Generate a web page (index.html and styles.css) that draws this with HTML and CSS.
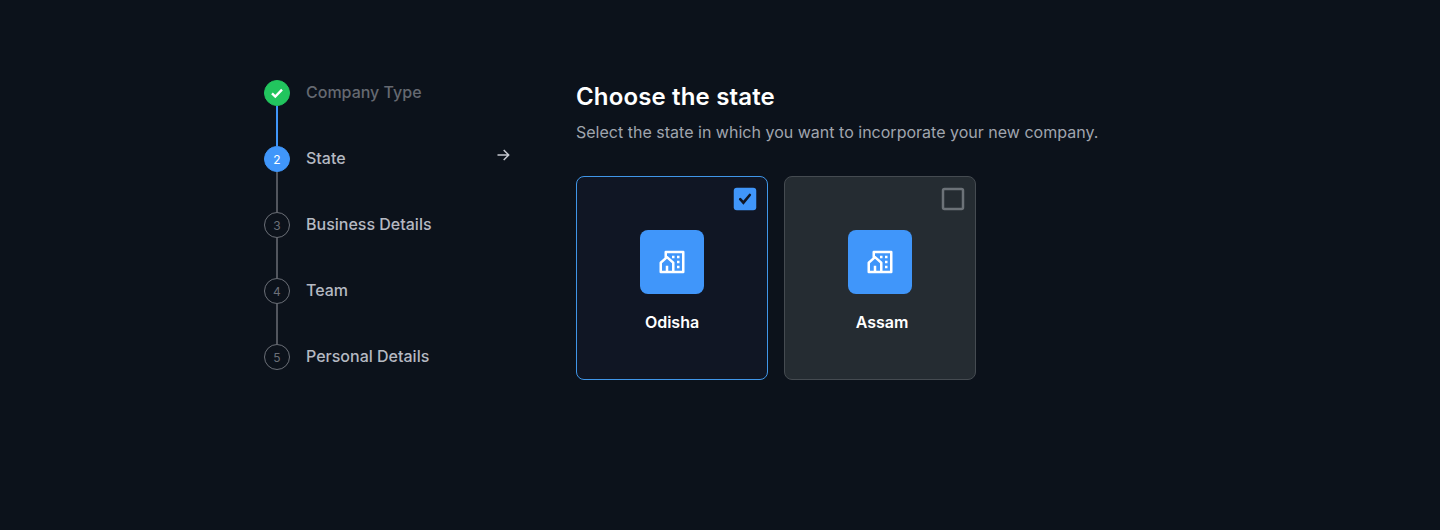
FILE: index.html
```html
<!DOCTYPE html>
<html lang="en">
<head>
<meta charset="utf-8">
<title>Choose the state</title>
<link rel="stylesheet" href="styles.css">
</head>
<body>
<svg class="defs" aria-hidden="true">
  <symbol id="community" viewBox="0 0 24 24">
    <path fill="currentColor" d="M21 21H3a1 1 0 0 1-1-1v-7.513a1 1 0 0 1 .343-.754L6 8.544V4a1 1 0 0 1 1-1h14a1 1 0 0 1 1 1v16a1 1 0 0 1-1 1zM9 19h3v-6.058L8 9.454l-4 3.488V19h3v-4h2v4zm5 0h6V5H8v2.127c.234 0 .469.082.657.247l5 4.359a1 1 0 0 1 .343.754V19zm2-8h2v2h-2v-2zm0 4h2v2h-2v-2zm0-8h2v2h-2V7zm-4 0h2v2h-2V7z"/>
  </symbol>
</svg>
<main class="wizard">
  <ol class="steps">
    <li class="step step--done">
      <span class="step-marker"><svg class="step-check" viewBox="0 0 14 14"><path d="M2 7.300l3.300 3.200L12 3.700"/></svg></span>
      <span class="step-label">Company Type</span>
    </li>
    <li class="step step--active">
      <span class="step-marker">2</span>
      <span class="step-label">State</span>
      <svg class="step-arrow" viewBox="0 0 14 14"><path d="M1.500 7h11M7.700 2l5 5-5 5"/></svg>
    </li>
    <li class="step"><span class="step-marker">3</span><span class="step-label">Business Details</span></li>
    <li class="step"><span class="step-marker">4</span><span class="step-label">Team</span></li>
    <li class="step"><span class="step-marker">5</span><span class="step-label">Personal Details</span></li>
  </ol>
  <section class="panel">
    <h1 class="title">Choose the state</h1>
    <p class="subtitle">Select the state in which you want to incorporate your new company.</p>
    <div class="cards">
      <div class="card card--selected">
        <svg class="checkbox" viewBox="0 0 30 30">
          <rect class="checkbox-fill" x="3.750" y="3.750" width="22.500" height="22.500" rx="3"/>
          <path class="checkbox-tick" d="M10.200 15.200l3.200 3.500L19.800 11"/>
        </svg>
        <span class="tile"><svg><use href="#community"/></svg></span>
        <span class="card-name">Odisha</span>
      </div>
      <div class="card">
        <svg class="checkbox" viewBox="0 0 30 30">
          <rect class="checkbox-frame" x="5" y="5" width="20" height="20" rx="1.500"/>
        </svg>
        <span class="tile"><svg><use href="#community"/></svg></span>
        <span class="card-name card-name--indented">Assam</span>
      </div>
    </div>
  </section>
</main>
</body>
</html>
```
FILE: styles.css
```css
* { box-sizing: border-box; }
body {
  margin: 0;
  min-height: 530px;
  background: #0c121b;
  color: #fff;
  font-family: Inter, "Liberation Sans", sans-serif;
}
.defs { display: none; }
.wizard {
  display: grid;
  grid-template-columns: 248px 1fr;
  column-gap: 64px;
  padding: 80px 264px 0;
}
.steps {
  list-style: none;
  margin: 0;
  padding: 0;
}
.step {
  position: relative;
  display: flex;
  gap: 16px;
  height: 66px;
}
.step:not(:last-child)::after {
  content: "";
  position: absolute;
  left: 12px;
  top: 26px;
  width: 2px;
  height: 40px;
  background: #52565e;
}
.step.step--done::after { background: #4096fa; }
.step-marker {
  display: flex;
  flex: none;
  align-items: center;
  justify-content: center;
  width: 26px;
  height: 26px;
  border: 1px solid #6b6f77;
  border-radius: 50%;
  color: #6b6f77;
  font-size: 12px;
}
.step--done .step-marker { background: #22c55e; border-color: #22c55e; }
.step--active .step-marker { background: #4096fa; border-color: #4096fa; color: #fff; }
.step-check { width: 14px; height: 14px; }
.step-check path { fill: none; stroke: #fff; stroke-width: 2.4; }
.step-label {
  flex: 1;
  color: #b5b9c2;
  font-size: 16px;
  font-weight: 500;
  line-height: 24px;
}
.step--done .step-label { color: #656971; }
.step-arrow { width: 14px; height: 14px; margin-top: 1.5px; margin-right: 2px; }
.step-arrow path { fill: none; stroke: #c5c8cf; stroke-width: 1.5; }
.title {
  margin: 0;
  padding-top: 1px;
  font-size: 24px;
  font-weight: 600;
  line-height: 32px;
  letter-spacing: 0.15px;
}
.subtitle {
  margin: 7px 0 32px;
  color: #a0a5ae;
  font-size: 16px;
  line-height: 24px;
  letter-spacing: 0.01px;
}
.cards { display: flex; gap: 16px; }
.card {
  position: relative;
  display: flex;
  flex-direction: column;
  align-items: center;
  gap: 16px;
  width: 192px;
  height: 204px;
  padding-top: 53px;
  background: #252c32;
  border: 1px solid #454b51;
  border-radius: 8px;
}
.card--selected { background: #101624; border-color: #4096e8; }
.checkbox {
  position: absolute;
  top: 7px;
  right: 7px;
  width: 30px;
  height: 30px;
}
.checkbox-fill { fill: #4096fa; }
.checkbox-tick { fill: none; stroke: #101624; stroke-width: 2.6; stroke-linecap: round; }
.checkbox-frame { fill: none; stroke: #6c7278; stroke-width: 2.5; }
.tile {
  display: flex;
  align-items: center;
  justify-content: center;
  width: 64px;
  height: 64px;
  background: #4096fa;
  border-radius: 8px;
}
.tile svg { width: 30px; height: 30px; }
.card-name {
  font-size: 16px;
  font-weight: 600;
  line-height: 24px;
}
.card-name--indented { padding-left: 4px; }
```
